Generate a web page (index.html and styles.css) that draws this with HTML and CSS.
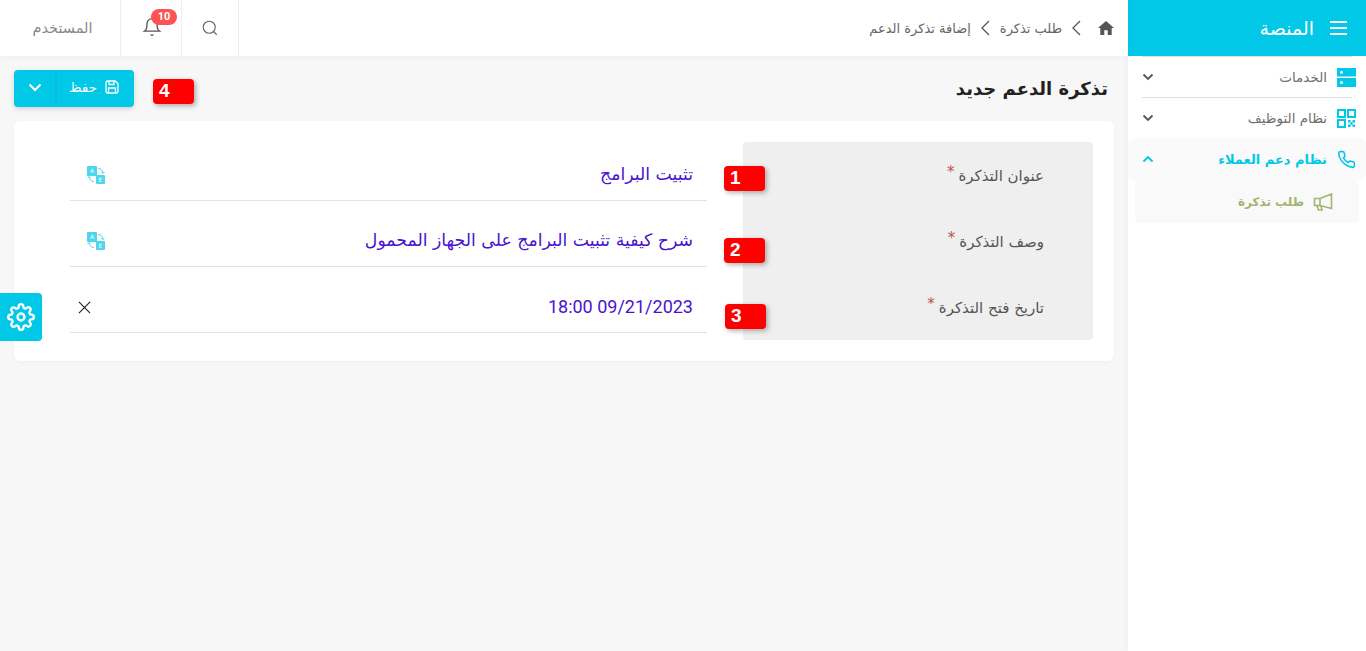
FILE: index.html
```html
<!DOCTYPE html>
<html lang="ar" dir="rtl">

<head>
    <meta charset="UTF-8">
    <meta name="viewport" content="width=device-width, initial-scale=1.0">
    <title>إضافة تذكرة الدعم</title>
    <link rel="stylesheet" href="styles.css">
</head>

<body>
    <div class="page">
        <!-- sidebar -->
        <aside class="sidebar">
            <div class="brand">
                <svg class="brand-icon" viewBox="0 0 17 14"><path d="M0 1h17M0 7h17M0 13h17" /></svg>
                <span>المنصة</span>
            </div>
            <nav class="menu">
                <div class="menu-item">
                    <svg class="menu-icon" viewBox="0 0 19 19">
                        <rect class="solid" width="19" height="8.500" />
                        <rect class="solid" y="10" width="19" height="9" />
                        <circle class="dot" cx="4.500" cy="4.200" r="1.500" />
                        <circle class="dot" cx="4.500" cy="14.500" r="1.500" />
                    </svg>
                    <span class="menu-text">الخدمات</span>
                    <svg class="chev" viewBox="0 0 12 8"><path d="M1.500 1.500 6 6l4.500-4.500" /></svg>
                </div>
                <div class="menu-item">
                    <svg class="menu-icon" viewBox="0 0 19 19">
                        <path class="line" d="M1 1h7v7H1zM11 1h7v7h-7zM1 11h7v7H1z" />
                        <path class="solid" d="M11 11h2.500v2.500H11zM15.500 11H18v2.500h-2.500zM13.300 13.300h2.400v2.400h-2.400zM11 15.600h2.500V18H11zM15.500 15.600H18V18h-2.500z" />
                    </svg>
                    <span class="menu-text">نظام التوظيف</span>
                    <svg class="chev" viewBox="0 0 12 8"><path d="M1.500 1.500 6 6l4.500-4.500" /></svg>
                </div>
                <div class="menu-item current">
                    <svg class="menu-icon" viewBox="0 0 24 24">
                        <path class="line" d="M22 16.920v3a2 2 0 0 1-2.180 2 19.790 19.790 0 0 1-8.630-3.070 19.500 19.500 0 0 1-6-6 19.790 19.790 0 0 1-3.070-8.670A2 2 0 0 1 4.110 2h3a2 2 0 0 1 2 1.720 12.840 12.840 0 0 0 .7 2.810 2 2 0 0 1-.45 2.110L8.090 9.910a16 16 0 0 0 6 6l1.270-1.270a2 2 0 0 1 2.110-.45 12.840 12.840 0 0 0 2.810.7A2 2 0 0 1 22 16.920z" />
                    </svg>
                    <span class="menu-text">نظام دعم العملاء</span>
                    <svg class="chev up" viewBox="0 0 12 8"><path d="M1.500 6.500 6 2l4.500 4.500" /></svg>
                </div>
                <div class="sub-item">
                    <svg class="sub-icon" viewBox="0 0 20 18">
                        <path d="M18.500 1v14.500L7 12.500H1.500v-7H7zM7 5.500v7M4 12.500 5.500 17H9l-1-4" />
                    </svg>
                    <span>طلب تذكرة</span>
                </div>
            </nav>
        </aside>

        <div class="main">
            <!-- top bar -->
            <header class="topbar">
                <div class="crumbs">
                    <svg class="home" viewBox="0 0 16 14"><path d="M8 0 0 7h2.300v7h4v-4.700h3.400V14h4V7H16z" /></svg>
                    <svg class="crumb-sep" viewBox="0 0 9 16"><path d="M8 1 1 8l7 7" /></svg>
                    <span>طلب تذكرة</span>
                    <svg class="crumb-sep" viewBox="0 0 9 16"><path d="M8 1 1 8l7 7" /></svg>
                    <span>إضافة تذكرة الدعم</span>
                </div>
                <div class="tools">
                    <div class="tool search-tool">
                        <svg class="tool-icon" viewBox="0 0 24 24"><circle cx="11" cy="11" r="8" /><path d="m21 21-4.350-4.350" /></svg>
                    </div>
                    <div class="tool bell-tool">
                        <svg class="bell" viewBox="0 0 24 24"><path d="M18 8A6 6 0 0 0 6 8c0 7-3 9-3 9h18s-3-2-3-9M13.730 21a2 2 0 0 1-3.460 0" /></svg>
                        <span class="bell-count">10</span>
                    </div>
                    <div class="tool user-tool">المستخدم</div>
                </div>
            </header>

            <section class="content">
                <div class="title-row">
                    <h1>تذكرة الدعم جديد</h1>
                    <div class="save-btn">
                        <div class="save-part">
                            <svg class="save-icon" viewBox="0 0 14 14"><path d="M1 2.500A1.500 1.500 0 0 1 2.500 1h7.700L13 3.800v7.700a1.500 1.500 0 0 1-1.500 1.500h-9A1.500 1.500 0 0 1 1 11.500zM4 1v3.500h5V1M3.500 13V8h7v5" /></svg>
                            <span>حفظ</span>
                        </div>
                        <div class="drop-part">
                            <svg class="drop-chev" viewBox="0 0 14 9"><path d="M1.500 1.500 7 7l5.500-5.500" /></svg>
                        </div>
                    </div>
                </div>

                <div class="card">
                    <div class="labels">
                        <div class="label-row">عنوان التذكرة <i>*</i></div>
                        <div class="label-row">وصف التذكرة <i>*</i></div>
                        <div class="label-row">تاريخ فتح التذكرة <i>*</i></div>
                    </div>
                    <div class="fields">
                        <div class="field">
                            <span>تثبيت البرامج</span>
                            <svg class="lang" viewBox="0 0 18 18">
                                <rect x="0" y="0" width="10" height="10" rx="1" />
                                <rect x="9" y="9" width="9" height="9" rx="1" />
                                <path class="arrow" d="M11 2.500c2.500 0 4.500 1.500 5 5M14.500 6l1.500 1.500L17.500 6M7 15.500c-2.500 0-4.500-1.500-5-5M.5 12 2 10.500 3.500 12" />
                                <text x="5" y="7" text-anchor="middle">A</text>
                                <text x="13.500" y="15.500" text-anchor="middle">E</text>
                            </svg>
                        </div>
                        <div class="field">
                            <span>شرح كيفية تثبيت البرامج على الجهاز المحمول</span>
                            <svg class="lang" viewBox="0 0 18 18">
                                <rect x="0" y="0" width="10" height="10" rx="1" />
                                <rect x="9" y="9" width="9" height="9" rx="1" />
                                <path class="arrow" d="M11 2.500c2.500 0 4.500 1.500 5 5M14.500 6l1.500 1.500L17.500 6M7 15.500c-2.500 0-4.500-1.500-5-5M.5 12 2 10.500 3.500 12" />
                                <text x="5" y="7" text-anchor="middle">A</text>
                                <text x="13.500" y="15.500" text-anchor="middle">E</text>
                            </svg>
                        </div>
                        <div class="field">
                            <span class="date">09/21/2023 18:00</span>
                            <svg class="clear" viewBox="0 0 14 14"><path d="M1 1l12 12M13 1 1 13" /></svg>
                        </div>
                    </div>
                </div>
            </section>
        </div>

        <!-- numbered notes on top of the form -->
        <div class="note note-1">1</div>
        <div class="note note-2">2</div>
        <div class="note note-3">3</div>
        <div class="note note-4">4</div>

        <div class="settings-tab">
            <svg viewBox="0 0 24 24"><circle cx="12" cy="12" r="3" /><path d="M19.400 15a1.650 1.650 0 0 0 .33 1.820l.06.06a2 2 0 0 1 0 2.830 2 2 0 0 1-2.830 0l-.06-.06a1.650 1.650 0 0 0-1.820-.33 1.650 1.650 0 0 0-1 1.510V21a2 2 0 0 1-2 2 2 2 0 0 1-2-2v-.09A1.650 1.650 0 0 0 9 19.400a1.650 1.650 0 0 0-1.820.33l-.06.06a2 2 0 0 1-2.830 0 2 2 0 0 1 0-2.830l.06-.06a1.650 1.650 0 0 0 .33-1.820 1.650 1.650 0 0 0-1.510-1H3a2 2 0 0 1-2-2 2 2 0 0 1 2-2h.09A1.650 1.650 0 0 0 4.600 9a1.650 1.650 0 0 0-.33-1.820l-.06-.06a2 2 0 0 1 0-2.830 2 2 0 0 1 2.830 0l.06.06a1.650 1.650 0 0 0 1.820.33H9a1.650 1.650 0 0 0 1-1.510V3a2 2 0 0 1 2-2 2 2 0 0 1 2 2v.09a1.650 1.650 0 0 0 1 1.510 1.650 1.650 0 0 0 1.820-.33l.06-.06a2 2 0 0 1 2.830 0 2 2 0 0 1 0 2.830l-.06.06a1.650 1.650 0 0 0-.33 1.820V9a1.650 1.650 0 0 0 1.510 1H21a2 2 0 0 1 2 2 2 2 0 0 1-2 2h-.09a1.650 1.650 0 0 0-1.510 1z" /></svg>
        </div>
    </div>
</body>

</html>
```

FILE: styles.css
```css
* {
    margin: 0;
    padding: 0;
    box-sizing: border-box;
    font-family: "DejaVu Sans", Roboto, sans-serif;
}

body {
    background-color: #f7f7f7;
    overflow: hidden;
}

svg {
    display: block;
    flex: none;
    fill: none;
}

.page {
    position: relative;
    display: flex;
    height: 651px;
}

/* sidebar */
.sidebar {
    width: 238px;
    flex: none;
    background-color: white;
    box-shadow: 0 0 8px rgba(0, 0, 0, 0.06);
}

.brand {
    height: 56px;
    display: flex;
    align-items: center;
    gap: 16px;
    padding-right: 19px;
    background-color: #02c8e8;
    color: white;
    font-size: 19px;
}

.brand-icon {
    width: 17px;
    height: 14px;
    stroke: white;
    stroke-width: 2;
}

.menu-item {
    height: 41px;
    margin: 0 14px;
    display: flex;
    align-items: center;
    gap: 10px;
    border-top: 1px solid #dedede;
    color: #707070;
    font-size: 13.500px;
}

.menu-icon {
    width: 19px;
    height: 19px;
    margin-right: -4px;
}

.menu-icon .solid {
    fill: #02c8e8;
}

.menu-icon .dot {
    fill: white;
}

.menu-icon .line {
    stroke: #02c8e8;
    stroke-width: 2;
}

.menu-text {
    flex: 1;
}

.chev {
    width: 12px;
    height: 8px;
    stroke: #555;
    stroke-width: 1.800;
}

.chev.up {
    stroke: #02c8e8;
}

.menu-item.current {
    height: 42px;
    margin: 0;
    padding: 0 14px;
    border-top: none;
    background-color: #fafafa;
    border-radius: 6px;
    color: #02c8e8;
    font-size: 13px;
    font-weight: bold;
}

.sub-item {
    height: 43px;
    margin: 0 7px;
    display: flex;
    align-items: center;
    gap: 9px;
    padding-right: 26px;
    background-color: #f9f9f9;
    border-radius: 6px;
    color: #a3b56e;
    font-size: 12px;
    font-weight: bold;
}

.sub-icon {
    width: 20px;
    height: 18px;
    stroke: #a3b56e;
    stroke-width: 1.600;
}

/* top bar */
.main {
    flex: 1;
    min-width: 0;
}

.topbar {
    height: 56px;
    display: flex;
    justify-content: space-between;
    background-color: white;
    box-shadow: 0 1px 6px rgba(0, 0, 0, 0.04);
}

.crumbs {
    display: flex;
    align-items: center;
    gap: 10px;
    padding-right: 14px;
    color: #666;
    font-size: 13px;
}

.home {
    width: 16px;
    height: 14px;
    margin-left: 7px;
    fill: #555;
}

.crumb-sep {
    width: 9px;
    height: 16px;
    stroke: #555;
    stroke-width: 1.300;
}

.tools {
    display: flex;
}

.tool {
    display: flex;
    align-items: center;
    justify-content: center;
    border-right: 1px solid #eeeeee;
    position: relative;
}

.search-tool {
    width: 57px;
}

.bell-tool {
    width: 61px;
}

.user-tool {
    width: 121px;
    padding-left: 5px;
    color: #888;
    font-size: 14.500px;
}

.tool-icon {
    width: 18px;
    height: 18px;
    stroke: #666;
    stroke-width: 1.500;
}

.bell {
    width: 20px;
    height: 20px;
    margin-top: -3px;
    margin-left: 2px;
    stroke: #555;
    stroke-width: 1.600;
}

.bell-count {
    position: absolute;
    top: 9px;
    left: 30px;
    width: 26px;
    height: 16px;
    border-radius: 8px;
    background-color: #ff5252;
    color: white;
    font-size: 11px;
    font-weight: bold;
    line-height: 16px;
    text-align: center;
    font-family: Roboto, sans-serif;
}

/* form */
.content {
    padding: 14px 14px 0;
}

.title-row {
    height: 37px;
    display: flex;
    justify-content: space-between;
    align-items: center;
    padding-right: 6px;
}

h1 {
    font-size: 18px;
    font-weight: bold;
    color: #222;
}

.save-btn {
    width: 120px;
    height: 37px;
    display: flex;
    background-color: #02c8e8;
    border-radius: 4px;
    box-shadow: 0 2px 5px rgba(0, 0, 0, 0.15);
    color: white;
    font-size: 13.500px;
}

.save-part {
    flex: 1;
    display: flex;
    align-items: center;
    gap: 8px;
    padding-right: 15px;
}

.save-part span {
    margin-top: -3px;
}

.save-icon {
    width: 14px;
    height: 14px;
    margin-top: -3px;
    stroke: white;
    stroke-width: 1.300;
}

.drop-part {
    width: 43px;
    display: flex;
    align-items: center;
    justify-content: center;
    border-right: 2px solid #05bedd;
    border-radius: 4px 0 0 4px;
}

.drop-chev {
    width: 14px;
    height: 9px;
    margin-top: -3px;
    stroke: white;
    stroke-width: 2;
}

.card {
    margin-top: 14px;
    height: 240px;
    display: flex;
    gap: 36px;
    padding: 14px 21px 28px 56px;
    background-color: white;
    border-radius: 6px;
    box-shadow: 0 1px 3px rgba(0, 0, 0, 0.03);
}

.labels {
    width: 350px;
    height: 198px;
    flex: none;
    margin-top: 7px;
    background-color: #efefef;
    border-radius: 4px;
}

.label-row {
    height: 66px;
    display: flex;
    align-items: center;
    gap: 4px;
    padding-top: 2px;
    padding-right: 49px;
    color: #555;
    font-size: 15px;
}

.label-row i {
    margin-top: -8px;
    color: #c0504d;
    font-style: normal;
}

.fields {
    flex: 1;
}

.field {
    height: 66px;
    display: flex;
    justify-content: space-between;
    align-items: flex-end;
    padding: 0 14px 16px 17px;
    border-bottom: 1px solid #e2e2e2;
    color: #4a12d0;
    font-size: 17.300px;
}

.date {
    margin-bottom: -1px;
    font-family: Roboto, sans-serif;
    font-size: 18px;
}

.lang {
    width: 18px;
    height: 18px;
}

.lang rect {
    fill: #4dd6ee;
}

.lang .arrow {
    stroke: #4dd6ee;
    stroke-width: 1;
}

.lang text {
    fill: white;
    font-size: 6px;
}

.clear {
    width: 13px;
    height: 13px;
    margin-bottom: 2px;
    margin-left: -9px;
    stroke: #223;
    stroke-width: 1.200;
}

/* numbered notes */
.note {
    position: absolute;
    width: 41px;
    height: 25px;
    padding-left: 6px;
    direction: ltr;
    background-color: #ff0000;
    border-radius: 4px;
    box-shadow: 2px 2px 5px rgba(0, 0, 0, 0.3);
    color: white;
    font-family: "Liberation Sans", sans-serif;
    font-size: 19px;
    font-weight: bold;
    line-height: 24px;
}

.note-1 {
    top: 166px;
    left: 724px;
}

.note-2 {
    top: 238px;
    left: 724px;
}

.note-3 {
    top: 304px;
    left: 725px;
}

.note-4 {
    top: 79px;
    left: 153px;
}

.settings-tab {
    position: absolute;
    top: 293px;
    left: 0;
    width: 42px;
    height: 48px;
    display: flex;
    align-items: center;
    justify-content: center;
    background-color: #02c8e8;
    border-radius: 0 4px 4px 0;
}

.settings-tab svg {
    width: 28px;
    height: 28px;
    stroke: white;
    stroke-width: 2;
}
```
